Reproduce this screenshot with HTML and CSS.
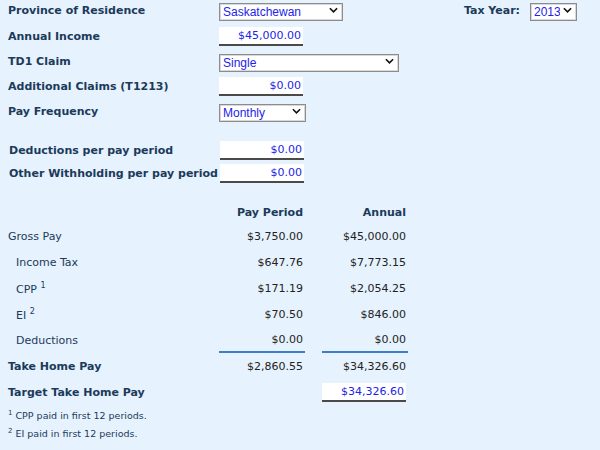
FILE: index.html
```html
<!DOCTYPE html>
<html lang="en">
<head>
    <meta charset="UTF-8">
    <title>Payroll Calculator</title>
    <link rel="stylesheet" href="styles.css">
</head>
<body>
    <div class="calc">
        <div class="form">
            <div class="row row-select">
                <label class="label">Province of Residence</label>
                <div class="select-wrap w-province">
                    <select class="select"><option>Saskatchewan</option></select>
                    <svg class="chev" viewBox="0 0 10 6"><path d="M1 1 L5 5 L9 1"/></svg>
                </div>
                <label class="label year-label">Tax Year:</label>
                <div class="select-wrap w-year">
                    <select class="select"><option>2013</option></select>
                    <svg class="chev" viewBox="0 0 10 6"><path d="M1 1 L5 5 L9 1"/></svg>
                </div>
            </div>
            <div class="row row-input">
                <label class="label">Annual Income</label>
                <input class="money" type="text" value="$45,000.00">
            </div>
            <div class="row row-select">
                <label class="label">TD1 Claim</label>
                <div class="select-wrap w-claim">
                    <select class="select"><option>Single</option></select>
                    <svg class="chev" viewBox="0 0 10 6"><path d="M1 1 L5 5 L9 1"/></svg>
                </div>
            </div>
            <div class="row row-input">
                <label class="label">Additional Claims (T1213)</label>
                <input class="money" type="text" value="$0.00">
            </div>
            <div class="row row-select">
                <label class="label">Pay Frequency</label>
                <div class="select-wrap w-freq">
                    <select class="select"><option>Monthly</option></select>
                    <svg class="chev" viewBox="0 0 10 6"><path d="M1 1 L5 5 L9 1"/></svg>
                </div>
            </div>
        </div>

        <div class="form extra">
            <div class="row row-extra">
                <label class="label">Deductions per pay period</label>
                <input class="money" type="text" value="$0.00">
            </div>
            <div class="row row-extra">
                <label class="label">Other Withholding per pay period</label>
                <input class="money" type="text" value="$0.00">
            </div>
        </div>

        <div class="results">
            <div class="line head">
                <span></span>
                <span class="num">Pay Period</span>
                <span class="num">Annual</span>
            </div>
            <div class="line">
                <span class="name">Gross Pay</span>
                <span class="num">$3,750.00</span>
                <span class="num">$45,000.00</span>
            </div>
            <div class="line">
                <span class="name sub">Income Tax</span>
                <span class="num">$647.76</span>
                <span class="num">$7,773.15</span>
            </div>
            <div class="line">
                <span class="name sub">CPP <sup>1</sup></span>
                <span class="num">$171.19</span>
                <span class="num">$2,054.25</span>
            </div>
            <div class="line">
                <span class="name sub">EI <sup>2</sup></span>
                <span class="num">$70.50</span>
                <span class="num">$846.00</span>
            </div>
            <div class="line">
                <span class="name sub">Deductions</span>
                <span class="num ruled">$0.00</span>
                <span class="num ruled">$0.00</span>
            </div>
            <div class="line">
                <span class="name strong">Take Home Pay</span>
                <span class="num">$2,860.55</span>
                <span class="num">$34,326.60</span>
            </div>
            <div class="line">
                <span class="name strong">Target Take Home Pay</span>
                <span></span>
                <input class="money target" type="text" value="$34,326.60">
            </div>
        </div>

        <div class="notes">
            <p><sup>1</sup> CPP paid in first 12 periods.</p>
            <p><sup>2</sup> EI paid in first 12 periods.</p>
        </div>
    </div>
</body>
</html>
```

FILE: styles.css
```css
body {
    margin: 0;
    background: #e6f2fd;
    font-family: "DejaVu Sans", Verdana, sans-serif;
    color: #1c3a5a;
}
.calc {
    width: 569px;
    padding: 0 0 0 8px;
}
.row {
    display: flex;
    align-items: center;
}
.row-select {
    height: 18px;
}
.row-select:first-child {
    height: 20px;
}
.row-input {
    height: 32px;
    padding-top: 1px;
    box-sizing: border-box;
}
.row-extra {
    height: 23px;
    padding: 1px 0 0 1px;
    box-sizing: border-box;
}
.extra {
    margin-top: 18px;
}
.label {
    width: 211px;
    font-weight: bold;
    font-size: 11px;
}
.year-label {
    width: auto;
    margin-left: auto;
    margin-right: 10px;
}
.select-wrap {
    position: relative;
    height: 18px;
}
.select {
    appearance: none;
    -webkit-appearance: none;
    width: 100%;
    height: 18px;
    margin: 0;
    padding: 0 16px 0 3px;
    border: 1px solid #8c8c8c;
    box-shadow: inset 0 0 0 1px #d8d8d8;
    border-radius: 0;
    background: #fff;
    font-family: "Liberation Sans", Arial, sans-serif;
    font-size: 12px;
    color: #2323e8;
}
.chev {
    position: absolute;
    right: 5px;
    top: 6px;
    width: 9px;
    height: 6px;
    fill: none;
    stroke: #111;
    stroke-width: 1.8;
}
.w-province { width: 124px; }
.w-year { width: 47px; }
.w-claim { width: 180px; }
.w-freq { width: 87px; }
.money {
    box-sizing: border-box;
    width: 84px;
    height: 19px;
    margin: 0;
    padding: 0 2px 0 0;
    border: none;
    border-bottom: 2px solid #4a4a4a;
    background: #fff;
    text-align: right;
    font-family: "DejaVu Sans", Verdana, sans-serif;
    font-size: 11px;
    color: #2323e8;
}
.results {
    margin-top: 18px;
}
.line {
    display: grid;
    grid-template-columns: 194px 86px 86px;
    column-gap: 17px;
    height: 26px;
    align-items: center;
    font-size: 11px;
}
.head {
    height: 21px;
    font-weight: bold;
}
.name.sub {
    padding-left: 8px;
}
.name.strong {
    font-weight: bold;
}
.num {
    text-align: right;
    padding-right: 2px;
    color: #222;
}
.head .num {
    color: #1c3a5a;
}
.ruled {
    align-self: stretch;
    display: flex;
    align-items: center;
    justify-content: flex-end;
    border-bottom: 2px solid #3a80c9;
}
sup {
    font-size: 8px;
}
.notes {
    margin-top: -1px;
    font-size: 9.5px;
}
.notes sup {
    font-size: 7px;
}
.notes p {
    margin: 0;
    height: 18px;
    line-height: 18px;
}
```
